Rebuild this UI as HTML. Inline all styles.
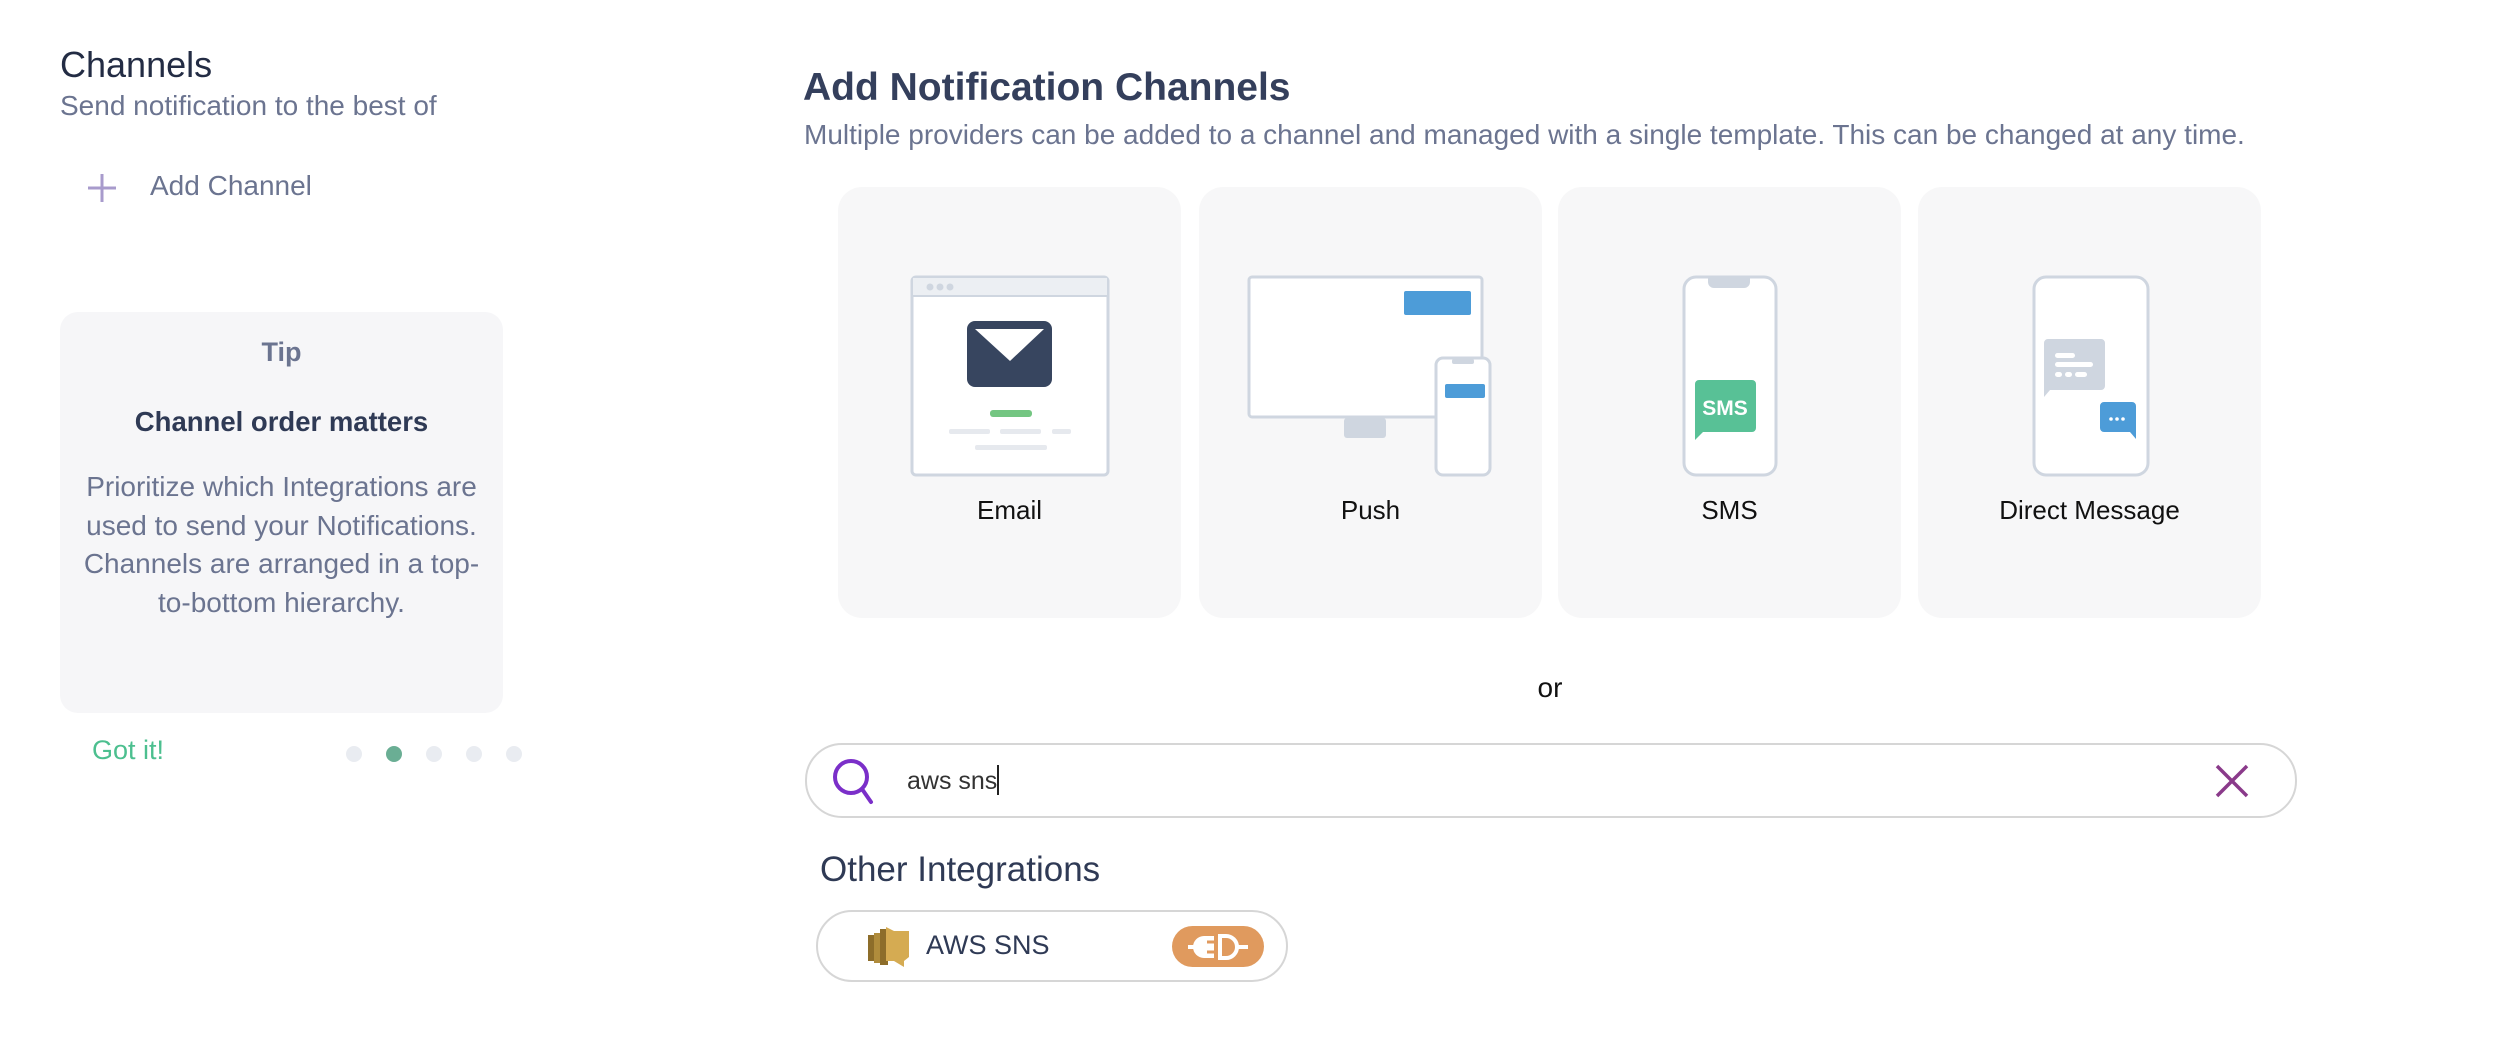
<!DOCTYPE html>
<html><head><meta charset="utf-8">
<style>
html,body{margin:0;padding:0;background:#fff;}
body{width:2500px;height:1044px;position:relative;overflow:hidden;font-family:"Liberation Sans",sans-serif;}
.a{position:absolute;white-space:nowrap;}
.card{position:absolute;top:187px;width:343px;height:431px;background:#f7f7f8;border-radius:24px;}
.lbl{position:absolute;width:343px;text-align:center;top:308px;font-size:26px;color:#111;}
</style></head><body>

<div class="a" style="left:60px;top:44px;font-size:36px;color:#232c44;">Channels</div>
<div class="a" style="left:60px;top:90px;font-size:28px;color:#6b7490;">Send notification to the best of</div>
<svg class="a" style="left:86px;top:172px" width="32" height="32"><path d="M16 2V30M2 16H30" stroke="#a89bcc" stroke-width="3"/></svg>
<div class="a" style="left:150px;top:170px;font-size:28px;color:#6b7490;">Add Channel</div>

<div class="a" style="left:60px;top:312px;width:443px;height:401px;background:#f6f6f8;border-radius:18px;"></div>
<div class="a" style="left:60px;width:443px;text-align:center;top:337px;font-size:27px;font-weight:bold;color:#6b7490;">Tip</div>
<div class="a" style="left:60px;width:443px;text-align:center;top:406px;font-size:27.5px;font-weight:bold;color:#2f3a55;">Channel order matters</div>
<div class="a" style="left:40px;width:483px;text-align:center;top:468px;font-size:28px;line-height:38.5px;color:#6b7490;white-space:normal;">Prioritize which Integrations are<br>used to send your Notifications.<br>Channels are arranged in a top-<br>to-bottom hierarchy.</div>
<div class="a" style="left:92px;top:735px;font-size:27px;color:#4cbf8f;">Got it!</div>
<svg class="a" style="left:340px;top:744px" width="190" height="20">
<circle cx="14" cy="10" r="8" fill="#e9ecf1"/><circle cx="54" cy="10" r="8" fill="#6aae94"/><circle cx="94" cy="10" r="8" fill="#e9ecf1"/><circle cx="134" cy="10" r="8" fill="#e9ecf1"/><circle cx="174" cy="10" r="8" fill="#e9ecf1"/>
</svg>

<div class="a" style="left:803px;top:66px;font-size:39px;font-weight:bold;color:#343f5c;">Add Notification Channels</div>
<div class="a" style="left:804px;top:119px;font-size:28px;color:#6b7490;">Multiple providers can be added to a channel and managed with a single template. This can be changed at any time.</div>

<div class="card" style="left:838px"><div class="lbl">Email</div></div>
<div class="card" style="left:1199px"><div class="lbl">Push</div></div>
<div class="card" style="left:1558px"><div class="lbl">SMS</div></div>
<div class="card" style="left:1918px"><div class="lbl">Direct Message</div></div>

<svg class="a" style="left:0;top:0" width="2500" height="1044">
<rect x="912" y="277" width="196" height="198" rx="4" fill="#fff" stroke="#cfd6e0" stroke-width="3"/>
<rect x="913" y="278" width="194" height="18" fill="#eceff3"/>
<line x1="912" y1="296" x2="1108" y2="296" stroke="#cfd6e0" stroke-width="2"/>
<circle cx="930" cy="287" r="3.5" fill="#cfd6e0"/><circle cx="940" cy="287" r="3.5" fill="#cfd6e0"/><circle cx="950" cy="287" r="3.5" fill="#cfd6e0"/>
<rect x="967" y="321" width="85" height="66" rx="8" fill="#37455f"/>
<path d="M975 329H1044L1010 361Z" fill="#fff"/>
<rect x="990" y="410" width="42" height="7" rx="3" fill="#74c682"/>
<rect x="949" y="429" width="41" height="5" rx="2" fill="#e6e9ee"/><rect x="1000" y="429" width="41" height="5" rx="2" fill="#e6e9ee"/><rect x="1052" y="429" width="19" height="5" rx="2" fill="#e6e9ee"/>
<rect x="975" y="445" width="72" height="5" rx="2" fill="#e6e9ee"/>
<rect x="1249" y="277" width="233" height="140" rx="3" fill="#fff" stroke="#cfd6e0" stroke-width="3"/>
<rect x="1404" y="291" width="67" height="24" rx="2" fill="#4d9cd8"/>
<rect x="1344" y="418" width="42" height="20" rx="3" fill="#cfd6e0"/>
<rect x="1436" y="358" width="54" height="117" rx="7" fill="#fff" stroke="#cfd6e0" stroke-width="3"/>
<rect x="1452" y="359" width="22" height="5" rx="2" fill="#cfd6e0"/>
<rect x="1445" y="384" width="40" height="14" rx="2" fill="#4d9cd8"/>
<rect x="1684" y="277" width="92" height="198" rx="12" fill="#fff" stroke="#cfd6e0" stroke-width="3"/>
<path d="M1708 278H1750V282a6 6 0 0 1-6 6H1714a6 6 0 0 1-6-6Z" fill="#cfd6e0"/>
<path d="M1699 380H1752a4 4 0 0 1 4 4V428a4 4 0 0 1-4 4H1703L1695 440V384a4 4 0 0 1 4-4Z" fill="#58c196"/>
<text x="1725" y="415" text-anchor="middle" font-family="Liberation Sans,sans-serif" font-weight="bold" font-size="21" fill="#fff">SMS</text>
<rect x="2034" y="277" width="114" height="198" rx="12" fill="#fff" stroke="#cfd6e0" stroke-width="3"/>
<path d="M2048 339H2101a4 4 0 0 1 4 4V386a4 4 0 0 1-4 4H2050L2044 397V343a4 4 0 0 1 4-4Z" fill="#cfd6e0"/>
<rect x="2055" y="353" width="20" height="5" rx="2.5" fill="#fff"/><rect x="2055" y="362" width="38" height="5" rx="2.5" fill="#fff"/>
<rect x="2055" y="372" width="7" height="5" rx="2.5" fill="#fff"/><rect x="2065" y="372" width="7" height="5" rx="2.5" fill="#fff"/><rect x="2075" y="372" width="12" height="5" rx="2.5" fill="#fff"/>
<path d="M2104 402H2132a4 4 0 0 1 4 4V439L2130 432H2104a4 4 0 0 1-4-4V406a4 4 0 0 1 4-4Z" fill="#4d9cd8"/>
<circle cx="2111" cy="419" r="1.8" fill="#fff"/><circle cx="2117" cy="419" r="1.8" fill="#fff"/><circle cx="2123" cy="419" r="1.8" fill="#fff"/>
</svg>

<div class="a" style="left:1520px;width:60px;text-align:center;top:672px;font-size:28px;color:#111;">or</div>

<div class="a" style="left:805px;top:743px;width:1488px;height:71px;border:2px solid #d6d6d6;border-radius:37px;"></div>
<svg class="a" style="left:830px;top:756px" width="48" height="50"><circle cx="21" cy="21" r="16" fill="none" stroke="#7b2fc9" stroke-width="4"/><path d="M32 33L41 46" stroke="#7b2fc9" stroke-width="4" stroke-linecap="round"/></svg>
<div class="a" style="left:907px;top:765px;font-size:25px;color:#333;">aws sns<span style="display:inline-block;width:2px;height:30px;background:#222;vertical-align:-6px;"></span></div>
<svg class="a" style="left:2214px;top:764px" width="36" height="34"><path d="M3 2L33 32M33 2L3 32" stroke="#8a3a8a" stroke-width="3.5"/></svg>

<div class="a" style="left:820px;top:850px;font-size:35px;color:#2f3a55;">Other Integrations</div>

<div class="a" style="left:816px;top:910px;width:468px;height:68px;border:2px solid #d6d6d6;border-radius:36px;"></div>
<svg class="a" style="left:864px;top:923px" width="48" height="46">
<path d="M4 12H12V38H4Z" fill="#8d6d2a"/><path d="M10 10H18V40H10Z" fill="#b08c3c"/><path d="M16 6H24V42H16Z" fill="#8d6d2a"/><path d="M22 4L30 8H45V34L40 38V44L30 38H22Z" fill="#d5ab52"/>
</svg>
<div class="a" style="left:926px;top:930px;font-size:27px;color:#2f3a55;">AWS SNS</div>
<div class="a" style="left:1172px;top:926px;width:92px;height:41px;background:#e09a5e;border-radius:21px;"></div>
<svg class="a" style="left:1186px;top:931px" width="64" height="32">
<path d="M2 16H18" stroke="#fff" stroke-width="4"/><path d="M18 5H28V27H18a11 11 0 0 1 0-22Z" fill="#fff"/>
<path d="M21 11H28M21 21H28" stroke="#e09a5e" stroke-width="3"/>
<path d="M34 5H40a11 11 0 0 1 0 22H34Z" fill="none" stroke="#fff" stroke-width="4"/><path d="M50 16H62" stroke="#fff" stroke-width="4"/>
</svg>

</body></html>
